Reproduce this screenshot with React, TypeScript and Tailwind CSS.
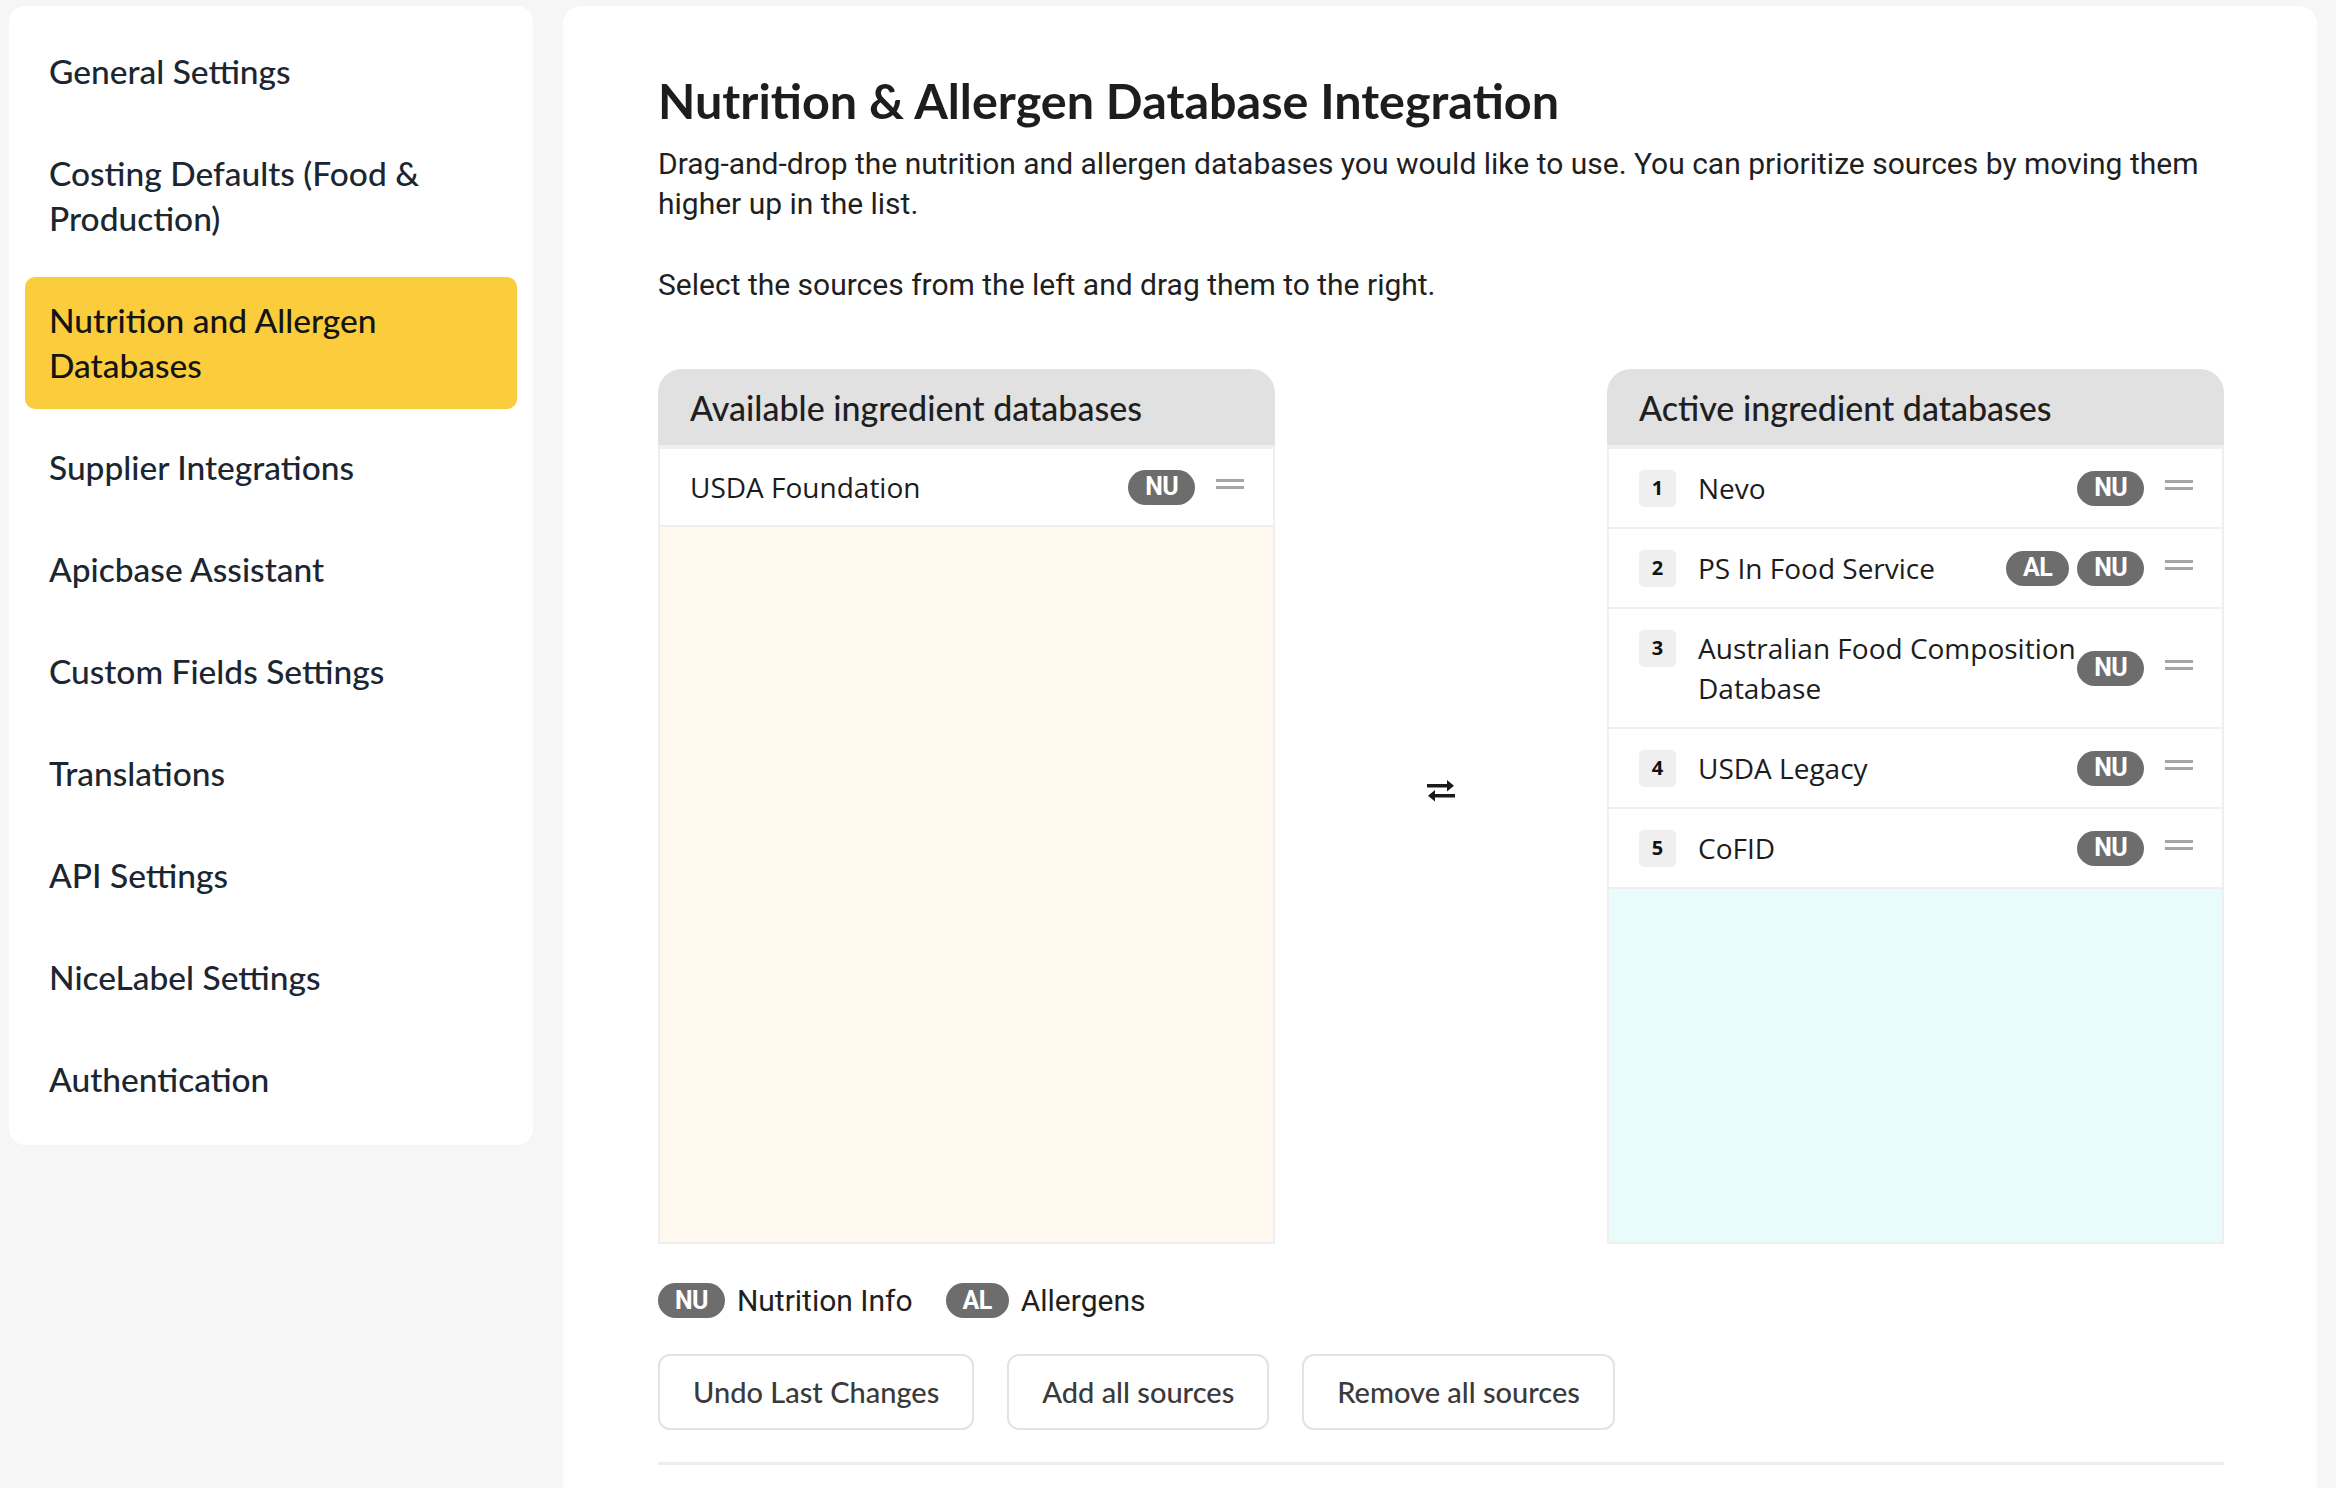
import React from "react";

const geo = { fontFamily: "Lato, 'Noto Sans', sans-serif" };
const body = { fontFamily: "Roboto, 'Liberation Sans', sans-serif" };
const row = { fontFamily: "'Open Sans', 'Noto Sans', sans-serif" };

const menu = [
  "General Settings",
  "Costing Defaults (Food & Production)",
  "Nutrition and Allergen Databases",
  "Supplier Integrations",
  "Apicbase Assistant",
  "Custom Fields Settings",
  "Translations",
  "API Settings",
  "NiceLabel Settings",
  "Authentication",
];

const active = [
  { n: 1, name: "Nevo", tags: ["NU"] },
  { n: 2, name: "PS In Food Service", tags: ["AL", "NU"] },
  { n: 3, name: "Australian Food Composition Database", tags: ["NU"] },
  { n: 4, name: "USDA Legacy", tags: ["NU"] },
  { n: 5, name: "CoFID", tags: ["NU"] },
];

const Badge = ({ label }: { label: string }) => (
  <span
    style={body}
    className="inline-flex h-[35px] items-center justify-center rounded-full bg-[#6d6d6d] px-[17px] text-[25px] font-bold tracking-tight text-white"
  >
    {label}
  </span>
);

const Handle = () => (
  <svg width="28" height="11" viewBox="0 0 28 11" className="-mt-[6px] shrink-0">
    <rect x="0" y="0" width="28" height="3" fill="#a5a5a5" />
    <rect x="0" y="7" width="28" height="3" fill="#a5a5a5" />
  </svg>
);

const PanelHeader = ({ title }: { title: string }) => (
  <div
    style={geo}
    className="flex h-[76px] shrink-0 items-center rounded-t-[24px] bg-[#e1e1e1] pl-[32px] text-[34px] font-medium text-[#1f1f1f]"
  >
    {title}
  </div>
);

export default function App() {
  return (
    <div className="flex h-screen gap-[30px] overflow-hidden bg-[#f6f6f6] pl-[9px] pr-[19px] pt-[6px]">
      <aside className="flex w-[524px] shrink-0 flex-col gap-[15px] self-start rounded-[16px] bg-white px-4 py-[22px]">
        {menu.map((m, i) => (
          <div
            key={m}
            style={geo}
            className={
              "rounded-[10px] py-[21px] pl-6 pr-4 text-[33.5px] font-medium leading-[45px] text-[#1b2631] " +
              (i === 2 ? "bg-[#fbcd3c] text-[#141414]" : "")
            }
          >
            {m}
          </div>
        ))}
      </aside>

      <main className="h-[1482px] flex-1 rounded-t-[18px] bg-white pl-[95px] pr-[93px] pt-[65px]">
        <h1 style={geo} className="text-[48.5px] font-bold leading-[58px] text-[#1d1d1d]">
          Nutrition &amp; Allergen Database Integration
        </h1>
        <p style={body} className="mt-[15px] text-[30px] leading-[40px] text-[#1f1f1f]">
          Drag-and-drop the nutrition and allergen databases you would like to use. You can prioritize sources by
          moving them higher up in the list.
        </p>
        <p style={body} className="mt-[41px] text-[30px] leading-[40px] text-[#1f1f1f]">
          Select the sources from the left and drag them to the right.
        </p>

        <div className="mt-[64px] grid h-[875px] grid-cols-[617px_1fr_617px]">
          <div className="flex flex-col">
            <PanelHeader title="Available ingredient databases" />
            <div className="flex flex-1 flex-col border-2 border-t-4 border-[#efefef] bg-[#fff8ef]">
              <div className="flex min-h-[78px] items-center border-b-2 border-[#efefef] bg-white pl-[30px] pr-[29px]">
                <span style={row} className="flex-1 text-[28px] leading-[40px] text-[#1c1c1c]">
                  USDA Foundation
                </span>
                <div className="mr-[21px] flex gap-[8px]">
                  <Badge label="NU" />
                </div>
                <Handle />
              </div>
            </div>
          </div>

          <div className="flex items-center justify-center">
            <svg width="30" height="24" viewBox="0 0 30 24" className="mb-[32px]">
              <rect x="1" y="5" width="22" height="3.5" fill="#1a1a1a" />
              <path d="M21 1 L28 6.75 L21 12.5 Z" fill="#1a1a1a" />
              <rect x="7" y="15" width="22" height="3.5" fill="#1a1a1a" />
              <path d="M9 11 L2 16.75 L9 22.5 Z" fill="#1a1a1a" />
            </svg>
          </div>

          <div className="flex flex-col">
            <PanelHeader title="Active ingredient databases" />
            <div className="flex flex-1 flex-col border-2 border-t-4 border-[#efefef] bg-[#e9fcfc]">
              {active.map((a) => (
                <div
                  key={a.n}
                  className="flex min-h-[78px] items-center border-b-2 border-[#efefef] bg-white py-[19px] pl-[30px] pr-[29px]"
                >
                  <div className="flex h-[40px] items-center self-start">
                    <span
                      style={row}
                      className="mr-[22px] flex h-[37px] w-[37px] items-center justify-center rounded-[5px] bg-[#efefef] text-[20px] font-bold text-[#111]"
                    >
                      {a.n}
                    </span>
                  </div>
                  <span style={row} className="flex-1 text-[28px] leading-[40px] text-[#1c1c1c]">
                    {a.name}
                  </span>
                  <div className="mr-[21px] flex gap-[8px]">
                    {a.tags.map((t) => (
                      <Badge key={t} label={t} />
                    ))}
                  </div>
                  <Handle />
                </div>
              ))}
            </div>
          </div>
        </div>

        <div className="mt-[34px] flex items-center">
          <Badge label="NU" />
          <span style={body} className="ml-[12px] text-[30px] text-[#1f1f1f]">
            Nutrition Info
          </span>
          <span className="ml-[33px]">
            <Badge label="AL" />
          </span>
          <span style={body} className="ml-[12px] text-[30px] text-[#1f1f1f]">
            Allergens
          </span>
        </div>

        <div className="mt-[31px] flex gap-[33px]">
          {["Undo Last Changes", "Add all sources", "Remove all sources"].map((b) => (
            <button
              key={b}
              style={geo}
              className="h-[76px] rounded-[12px] border-2 border-[#e3e3e3] bg-white px-[33px] text-[29px] font-medium text-[#3a3a3a]"
            >
              {b}
            </button>
          ))}
        </div>

        <div className="mt-[32px] h-[3px] bg-[#eeeeee]" />
      </main>
    </div>
  );
}
